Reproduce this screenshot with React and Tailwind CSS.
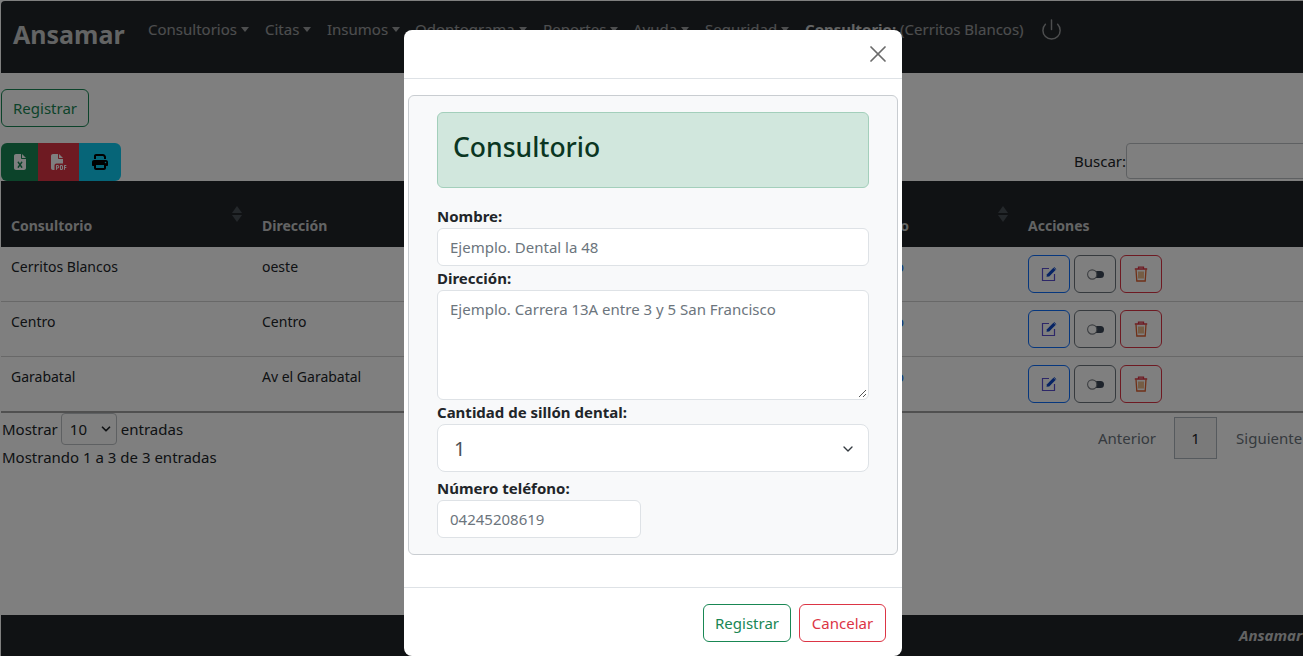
import React from 'react';
import { FaFileExcel, FaFilePdf, FaPrint } from 'react-icons/fa6';
import { Power, X, ChevronDown } from 'lucide-react';

const menu = [
    ['Consultorios', 'w-[101px]'],
    ['Citas', 'w-[46px]'],
    ['Insumos', 'w-[72px]'],
    ['Odontograma', 'w-[112px]'],
    ['Reportes', 'w-[74px]'],
    ['Ayuda', 'w-[56px]'],
    ['Seguridad', 'w-[84px]'],
];

const rows = [
    ['Cerritos Blancos', 'oeste'],
    ['Centro', 'Centro'],
    ['Garabatal', 'Av el Garabatal'],
];

function SortArrows() {
    return (
        <span className="absolute right-[10px] top-[25px] flex flex-col gap-[2px]">
            <span className="block w-0 h-0 border-x-[5px] border-x-transparent border-b-[7px] border-b-[#495057]"></span>
            <span className="block w-0 h-0 border-x-[5px] border-x-transparent border-t-[7px] border-t-[#495057]"></span>
        </span>
    );
}

function EditIcon() {
    return (
        <svg width="16" height="16" viewBox="0 0 16 16">
            <path d="M8 2.5H1.5v12h12V8" fill="none" stroke="#5a4fd0" strokeWidth="1.2" />
            <path d="M5.5 10.8 6 8.2 12.4 1.8 14.6 4 8.2 10.4Z" fill="#0d47c9" />
            <path d="M13.2 1 15.4 3.2 14.9 3.7 12.7 1.5Z" fill="#0d47c9" />
        </svg>
    );
}

function TrashIcon() {
    return (
        <svg width="14" height="16" viewBox="0 0 14 16" fill="none" stroke="#dc3545" strokeWidth="1.3">
            <path d="M0.8 3h12.4M4.5 3V1.2h5V3" />
            <path d="M2 3.2 2.8 15h8.4L12 3.2" stroke="#e0602f" />
            <path d="M5 5.5v7M7 5.5v7M9 5.5v7" stroke="#d9822b" strokeWidth="1.1" />
        </svg>
    );
}

function ToggleIcon() {
    return (
        <svg width="17" height="11" viewBox="0 0 17 11">
            <rect x="6" y="2" width="11" height="7" rx="3.5" fill="#3b4656" />
            <circle cx="5.2" cy="5.5" r="4.6" fill="#fff" stroke="#7a7f85" strokeWidth="1.1" />
        </svg>
    );
}

function Actions() {
    return (
        <div className="flex gap-[4px]">
            <button className="w-[42px] h-[38px] flex items-center justify-center border border-[#0d6efd] rounded-[6px]">
                <EditIcon />
            </button>
            <button className="w-[42px] h-[38px] flex items-center justify-center border border-[#6c757d] rounded-[6px]">
                <ToggleIcon />
            </button>
            <button className="w-[42px] h-[38px] flex items-center justify-center border border-[#dc3545] rounded-[6px]">
                <TrashIcon />
            </button>
        </div>
    );
}

function Field({ label, children }) {
    return (
        <div>
            <label className="block font-bold text-[15px] leading-[24px] h-[24px] text-[#212529]">{label}</label>
            {children}
        </div>
    );
}

export default function App() {
    return (
        <div className="relative w-[1303px] h-[656px] overflow-hidden bg-white text-[#212529] text-[15px] font-['Noto_Sans','Open_Sans',sans-serif]">
            <div className="h-full pt-px pl-px flex flex-col bg-white">
                <nav className="h-[72px] shrink-0 bg-[#212529] rounded-tl-[4px] flex items-start pl-[12px]">
                    <a className="text-[25px] font-bold text-white/75 leading-[36px] mt-[15px] w-[135px]">Ansamar</a>
                    <ul className="flex items-center gap-[16px] mt-[16px] text-white/55 leading-[24px] whitespace-nowrap">
                        {menu.map(([item, width]) => (
                            <li key={item} className={`flex items-center gap-[4px] ${width}`}>
                                {item}
                                <span className="w-0 h-0 border-x-[4px] border-x-transparent border-t-[5px] border-t-white/55"></span>
                            </li>
                        ))}
                        <li><b className="font-bold text-white/75">Consultorio:</b> (Cerritos Blancos)</li>
                        <li><Power size={23} strokeWidth={1.5} /></li>
                    </ul>
                </nav>

                <div className="pt-[16px] shrink-0">
                    <button className="h-[38px] w-[88px] border border-[#198754] rounded-[6px] text-[#198754]">Registrar</button>
                </div>

                <div className="flex justify-between items-start mt-[16px] h-[38px] shrink-0">
                    <div className="flex h-[38px] rounded-[6px] overflow-hidden">
                        <button className="w-[37px] bg-[#198754] text-white flex items-center justify-center"><FaFileExcel size={16} /></button>
                        <button className="w-[41px] bg-[#dc3545] text-white flex items-center justify-center"><FaFilePdf size={16} /></button>
                        <button className="w-[42px] bg-[#0dcaf0] text-black flex items-center justify-center"><FaPrint size={16} /></button>
                    </div>
                    <label className="flex items-center shrink-0 w-[229px] h-[36px]">
                        Buscar:
                        <input className="w-[190px] h-[36px] shrink-0 border border-[#bcc0c4] rounded-[4px] bg-white" />
                    </label>
                </div>

                <table className="w-[1320px] table-fixed border-separate border-spacing-0 shrink-0 text-[14px]">
                    <colgroup>
                        <col className="w-[251px]" />
                        <col className="w-[350px]" />
                        <col className="w-[416px]" />
                        <col />
                    </colgroup>
                    <thead>
                        <tr className="h-[66px] bg-[#212529] text-white/75">
                            <th className="relative text-left align-bottom px-[10px] pb-[11px] font-bold">Consultorio<SortArrows /></th>
                            <th className="relative text-left align-bottom px-[10px] pb-[11px] font-bold">Dirección</th>
                            <th className="relative text-right align-bottom pr-[109px] pb-[11px] font-bold">Estado<SortArrows /></th>
                            <th className="text-left align-bottom px-[10px] pb-[11px] font-bold">Acciones</th>
                        </tr>
                    </thead>
                    <tbody>
                        {rows.map(([name, address], i) => {
                            const line = i === 2 ? 'h-[56px] border-b-2 border-[#a0a0a0]' : 'h-[55px] border-b border-[#d0d0d0]';
                            return (
                                <tr key={name}>
                                    <td className={`align-top px-[10px] pt-[9px] ${line}`}>{name}</td>
                                    <td className={`align-top px-[10px] pt-[9px] ${line}`}>{address}</td>
                                    <td className={`align-top text-right pr-[114px] pt-[9px] text-[#0d6efd] ${line}`}>Activo</td>
                                    <td className={`align-top px-[10px] pt-[8px] ${line}`}><Actions /></td>
                                </tr>
                            );
                        })}
                    </tbody>
                </table>

                <div className="flex justify-between shrink-0">
                    <div className="pl-px">
                        <div className="flex items-center h-[34px] -mt-px">
                            Mostrar
                            <div className="w-[56px] h-[32px] ml-[3px] mr-[4px] border border-[#bcc0c4] rounded-[4px] flex items-center justify-between pl-[8px] pr-[3px]">
                                10
                                <ChevronDown size={14} strokeWidth={3} />
                            </div>
                            entradas
                        </div>
                        <p className="leading-[24px] -mt-[1px]">Mostrando 1 a 3 de 3 entradas</p>
                    </div>
                    <div className="flex items-center gap-[19px] h-[42px] mt-[4px] w-[205px] shrink-0 text-[#6c757d]">
                        <span className="-mr-px">Anterior</span>
                        <span className="w-[43px] h-[42px] shrink-0 flex items-center justify-center border border-[#adb5bd] bg-[#f4f4f4] text-[#212529]">1</span>
                        Siguiente
                    </div>
                </div>

                <footer className="mt-auto h-[41px] shrink-0 bg-[#212529] flex justify-end items-center overflow-hidden">
                    <b className="font-bold italic text-white/75 w-[64px] shrink-0 whitespace-nowrap">Ansamar</b>
                </footer>
            </div>

            <div className="absolute inset-0 bg-black/50"></div>

            <div className="absolute left-[404px] top-[30px] w-[498px] h-[626px] bg-white rounded-[8px] flex flex-col">
                <header className="h-[49px] shrink-0 border-b border-[#dee2e6] flex justify-end items-center pr-[10px]">
                    <X size={28} strokeWidth={1.5} className="text-[#6b6b6b]" />
                </header>
                <div className="mt-[16px] mx-[4px] h-[460px] shrink-0 bg-[#f8f9fa] border border-[#c9cdd1] rounded-[6px] pt-[16px] px-[28px]">
                    <div className="h-[76px] bg-[#d1e7dd] border border-[#a3cfbb] rounded-[6px] pl-[15px] pt-[14px]">
                        <h2 className="text-[26.5px] leading-[40px] text-[#0a3622] font-medium">Consultorio</h2>
                    </div>
                    <div className="mt-[16px]">
                        <Field label="Nombre:">
                            <div className="h-[38px] bg-white border border-[#dee2e6] rounded-[6px] px-[12px] leading-[36px] text-[#6c757d]">Ejemplo. Dental la 48</div>
                        </Field>
                        <Field label="Dirección:">
                            <div className="relative h-[110px] bg-white border border-[#dee2e6] rounded-[6px] px-[12px] pt-[6px] leading-[24px] text-[#6c757d]">
                                Ejemplo. Carrera 13A entre 3 y 5 San Francisco
                                <svg className="absolute right-[1px] bottom-[1px]" width="9" height="9" viewBox="0 0 9 9" stroke="#555" strokeWidth="1">
                                    <path d="M1 8 8 1M5 8 8 5" />
                                </svg>
                            </div>
                        </Field>
                        <Field label="Cantidad de sillón dental:">
                            <div className="h-[48px] bg-white border border-[#dee2e6] rounded-[8px] pl-[16px] pr-[12px] pt-px flex items-center justify-between text-[20px] text-[#495057]">
                                1
                                <ChevronDown size={16} strokeWidth={2} className="text-[#343a40]" />
                            </div>
                        </Field>
                        <div className="mt-[4px]">
                            <Field label="Número teléfono:">
                                <div className="w-[204px] h-[38px] bg-white border border-[#dee2e6] rounded-[6px] px-[12px] leading-[36px] text-[#6c757d]">04245208619</div>
                            </Field>
                        </div>
                    </div>
                </div>
                <footer className="mt-[32px] border-t border-[#dee2e6] flex justify-end gap-[8px] pt-[16px] pr-[16px]">
                    <button className="w-[88px] h-[38px] border border-[#198754] rounded-[6px] text-[#198754]">Registrar</button>
                    <button className="w-[87px] h-[38px] border border-[#dc3545] rounded-[6px] text-[#dc3545]">Cancelar</button>
                </footer>
            </div>
        </div>
    );
}
